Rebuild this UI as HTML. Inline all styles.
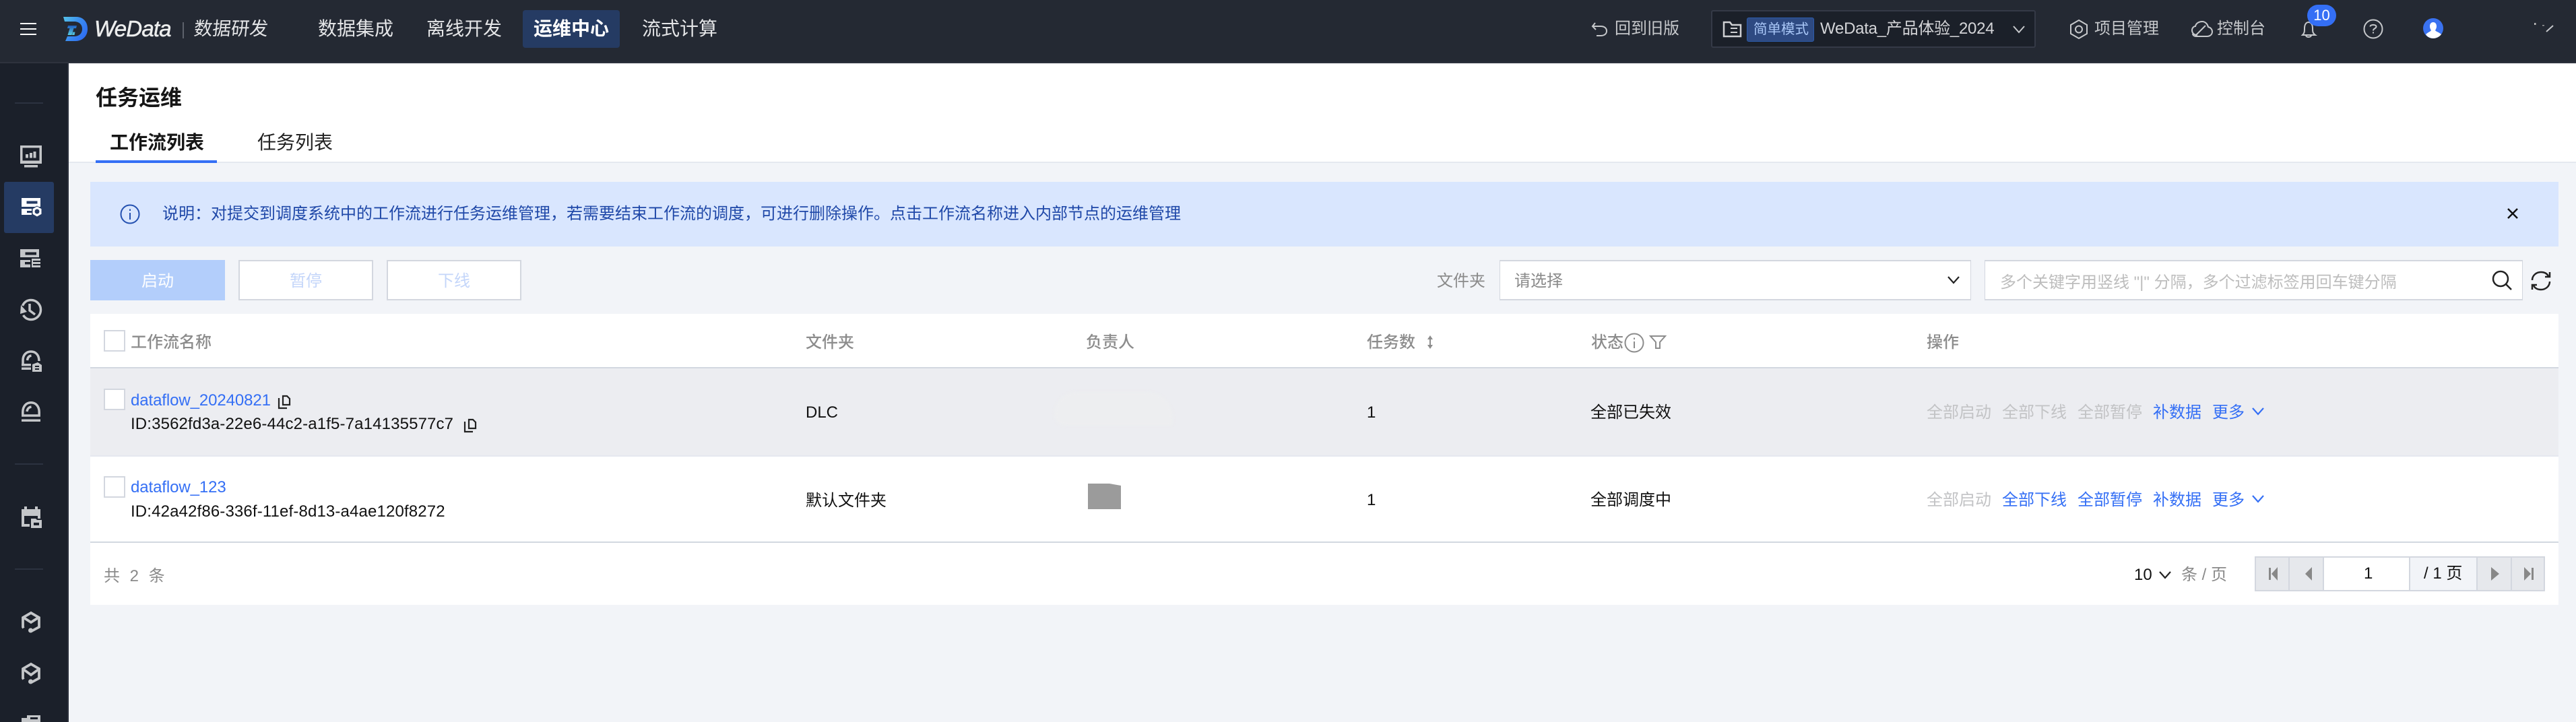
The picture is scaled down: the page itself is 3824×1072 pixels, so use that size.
<!DOCTYPE html>
<html lang="zh"><head><meta charset="utf-8"><title>WeData</title>
<style>
*{box-sizing:border-box}
html,body{margin:0;padding:0;width:3824px;height:1072px;overflow:hidden;background:#f2f4f8;font-family:"Liberation Sans","Noto Sans CJK SC",sans-serif;font-size:24px;color:#111}
.b{position:absolute}
.t{position:absolute;white-space:nowrap;line-height:32px;height:32px}
.nav{font-size:28px;line-height:40px;height:40px;top:23px;color:#e4e5e7}
.top{top:27px;color:#c6c8cb}
.g{color:#8a8a8a}.hd{color:#8c8c8c;font-weight:500;top:493px}
.l{color:#346ff5}.d{color:#c2c3c5}
.cb{position:absolute;left:154px;width:32px;height:32px;background:#fff;border:2px solid #d3d7df}
.btn{position:absolute;top:386px;width:200px;height:60px;line-height:59px;text-align:center;background:#fff;border:2px solid #d3d7df;color:#c4d6fa}
.inp{position:absolute;top:386px;height:60px;background:#fff;border:1px solid #d3d7df;border-top:2px solid #d3d7df;border-bottom:2px solid #d3d7df}
.pg{position:absolute;top:826px;height:52px;background:#e6e8ec;border:2px solid #d3d7df}
svg{position:absolute;overflow:visible}
</style></head><body>

<!-- top bar -->
<div class="b" style="left:0;top:0;width:3824px;height:94px;background:#242933;border-bottom:2px solid #2e323d"></div>
<svg style="left:0;top:0" width="300" height="94" viewBox="0 0 300 94">
<defs><linearGradient id="lg" x1="0" y1="0" x2="1" y2="0.6"><stop offset="0" stop-color="#55c3e8"/><stop offset=".55" stop-color="#3b8df0"/><stop offset="1" stop-color="#2f6ff2"/></linearGradient>
<linearGradient id="lt" x1="0" y1="0" x2="0" y2="1"><stop offset="0" stop-color="#1f5fc0"/><stop offset="1" stop-color="#58cbe0"/></linearGradient></defs>
<path d="M30 35H54M30 43H54M30 51H54" stroke="#fff" stroke-width="2" fill="none"/>
<path d="M94 25H113C124 25 130 33 130 43C130 54 122 61 112 61H97L100 54H110C118 54 122 49 122 43C122 37 118 32 110 32H96Z" fill="url(#lg)"/>
<path d="M101 38H114L113 42H109.500L106.500 52H100.500L103.500 42H100Z M108 47.500H111.500L110.500 52H107Z" fill="url(#lt)"/>
<rect x="271" y="33" width="2" height="24" fill="#5d616b"/>
</svg>
<div class="t" style="left:140px;top:24px;font-size:33px;line-height:38px;height:38px;font-style:italic;font-weight:400;-webkit-text-stroke:.5px #eceded;color:#eceded;letter-spacing:-.8px">WeData</div>
<div class="t" style="left:288px;top:23px;font-size:27.500px;line-height:40px;height:40px;transform:skewX(-6deg);color:#e4e5e7">数据研发</div>
<div class="t nav" style="left:472px">数据集成</div>
<div class="t nav" style="left:633px">离线开发</div>
<div class="b" style="left:776px;top:15px;width:144px;height:56px;background:#253b63;border-radius:4px"></div>
<div class="t nav" style="left:792px;color:#fff;font-weight:700">运维中心</div>
<div class="t nav" style="left:953px">流式计算</div>

<svg style="left:2300px;top:0" width="1524" height="94" viewBox="2300 0 1524 94" fill="none" stroke="#c6c8cb" stroke-width="2">
<path d="M2368 34L2364 39L2369 44M2364 39H2376C2382 39 2385 42 2385 46C2385 50 2382 53 2376 53H2370"/>
<path d="M3086 30L3098 37V50L3086 57L3074 50V37Z"/><circle cx="3086" cy="43.500" r="5"/>
<path d="M3262 52C3256 52 3254 48 3254 45C3254 41 3257 39 3259 39C3260 34 3265 32 3269 32C3274 32 3277 36 3278 40C3282 41 3284 44 3284 47C3284 51 3281 54 3276 54H3260C3257 54 3255 52 3255 50M3258 54L3274 38"/>
<path d="M3418 52C3421 49 3421 47 3421 42C3421 37 3423 33 3427 33C3431 33 3433 37 3433 42C3433 47 3433 49 3437 52ZM3423 52C3423 56 3431 56 3431 52"/>
<circle cx="3523" cy="43" r="13.500"/>
<path d="M3518.500 39.500C3518.500 36 3527.500 36 3527.500 39.500C3527.500 42.500 3523 42 3523 45.500"/>
<rect x="3522" y="47.500" width="2" height="2" fill="#c6c8cb" stroke="none"/>
<path d="M3780 47L3790 38"/><rect x="3762" y="34" width="2.500" height="3" fill="#bbb" stroke="none"/><rect x="3774" y="37" width="3" height="1.500" fill="#999" stroke="none"/>
</svg>
<div class="t top" style="left:2397px">回到旧版</div>
<div class="b" style="left:2540px;top:15px;width:482px;height:56px;background:#1b2029;border:2px solid #353a47;border-radius:3px"></div>
<svg style="left:2555px;top:28px" width="32" height="30" viewBox="0 0 32 30" fill="none" stroke="#cfd0d3" stroke-width="2.500"><path d="M4 5H13L16 9H29V26H4Z"/><path d="M14 14H24M14 20H24" stroke-width="2"/></svg>
<div class="b" style="left:2593px;top:26px;width:100px;height:36px;background:#2e4a82;border:1px solid #2c5ba9;border-radius:3px"></div>
<div class="t" style="left:2603px;top:28px;font-size:20.500px;color:#a9c7f7">简单模式</div>
<div class="t" style="left:2702px;top:27px;color:#d4d5d8;letter-spacing:-.25px">WeData_产品体验_2024</div>
<svg style="left:2988px;top:38px" width="18" height="12" viewBox="0 0 18 12" fill="none" stroke="#c6c8cb" stroke-width="2"><path d="M1 1L9 10L17 1"/></svg>
<div class="t top" style="left:3109px">项目管理</div>
<div class="t top" style="left:3291px">控制台</div>
<div class="b" style="left:3425px;top:7px;width:43px;height:32px;background:#346ff5;border-radius:16px;color:#fff;font-size:22px;line-height:32px;text-align:center">10</div>
<svg style="left:3597px;top:27px" width="30" height="30" viewBox="0 0 30 30"><circle cx="15" cy="15" r="15" fill="#3a72f0"/><path d="M15 6C18.500 6 20 9 20 12C20 15 18.500 17 18 18C19 20 24 21 27 24C24 28 19 30 15 30C11 30 6 28 4 24C7 21 11 20 12 18C11.500 17 10 15 10 12C10 9 11.500 6 15 6Z" fill="#fff"/></svg>

<!-- sidebar -->
<div class="b" style="left:0;top:94px;width:102px;height:978px;background:#1b202a;border-right:2px solid #2b303c"></div>
<div class="b" style="left:6px;top:270px;width:74px;height:76px;background:#253b63;border-radius:3px"></div>
<svg style="left:0;top:0" width="102" height="1072" viewBox="0 0 102 1072" fill="#c4c6c9">
<rect x="22" y="152" width="42" height="2" fill="#2c3240"/>
<rect x="22" y="688" width="42" height="2" fill="#2c3240"/>
<rect x="22" y="844" width="42" height="2" fill="#2c3240"/>
<!-- monitor -->
<path fill-rule="evenodd" d="M30 216H62V243H30ZM33.500 219.500V238.500H58.500V219.500Z"/>
<rect x="36" y="245" width="20" height="3.500"/><rect x="38" y="229" width="4" height="5.500"/><rect x="44" y="227" width="4" height="7.500"/><rect x="49.500" y="225" width="4" height="9.500"/>
<!-- active -->
<path fill="#fff" fill-rule="evenodd" d="M32 294H60V307H32ZM39.500 298.500V302.500H55.500V298.500ZM32 310H47V319H32ZM40 313V316H47V313Z"/>
<path d="M55 306L62 310V318L55 322L48 318V310Z" fill="#fff" stroke="#253b63" stroke-width="1"/><circle cx="55" cy="314" r="3.500" fill="#253b63"/>
<!-- list -->
<path fill-rule="evenodd" d="M30 370H58V382H30ZM37.500 374.500V378.500H54V374.500ZM30 386H45V397H30ZM37 389V392.500H45V389Z"/>
<path d="M47 384H60V387H47ZM47 389H60V392H47ZM47 394H60V397H47Z"/><path d="M47 384H49V397H47Z"/>
<!-- clock -->
<g fill="none" stroke="#c4c6c9" stroke-width="3.500"><path d="M33.500 454C36 448 41 445.500 46 445.500C54 445.500 60.500 452 60.500 460C60.500 468 54 474.500 46 474.500C41 474.500 37 472 34.500 468"/><path d="M44 451V461L52 467"/></g>
<path d="M30 466L31 453L40 463Z"/>
<!-- gauge doc -->
<g fill="none" stroke="#c4c6c9" stroke-width="3.500"><path d="M34 540V535C34 527 39 522 46 522C53 522 58 527 58 536"/><path d="M40.500 535C41 531 43 528.500 46.500 528"/></g>
<rect x="32" y="540" width="14" height="3.500"/><rect x="32" y="545.500" width="14" height="3.500"/>
<path fill-rule="evenodd" d="M48 541L56 538L62 542V552H48ZM52 543V545H58V543ZM52 547V549H58V547Z"/>
<!-- dome -->
<g fill="none" stroke="#c4c6c9" stroke-width="3.500"><path d="M33.800 617V612C33.800 603 39 597.800 46 597.800C53 597.800 58.200 603 58.200 612V617H33.800Z"/><path d="M40 611C40.500 607 43 604.500 46.500 604"/></g>
<rect x="32" y="622.500" width="28" height="3.500"/>
<!-- calendar -->
<path d="M36 752H40V756H52V752H56V756H60V770H56V766H36V778H44V782H32V756H36Z"/>
<path fill-rule="evenodd" d="M46 770H53L55 772H62V784H46ZM50 776V780H58V776Z"/>
<!-- cubes -->
<g fill="none" stroke="#c4c6c9" stroke-width="3.800"><path d="M35 932.500L34 931V917L46 910L58 917V931L46 937.500"/><path d="M35 917L46 924L57 917"/></g><circle cx="45.500" cy="936" r="3.500"/>
<g fill="none" stroke="#c4c6c9" stroke-width="3.800"><path d="M35 1008.500L34 1007V993L46 986L58 993V1007L46 1013.500"/><path d="M35 994L46 1002L57 994"/></g><circle cx="45.500" cy="1012" r="3.500"/>
<path fill-rule="evenodd" d="M40 1062H60V1072H32V1066H40ZM45 1065V1068H56V1065Z"/>
</svg>

<!-- header card -->
<div class="b" style="left:102px;top:94px;width:3722px;height:148px;background:#fff;border-bottom:2px solid #e5e8ef"></div>
<div class="t" style="left:142px;top:124px;font-size:32px;line-height:42px;height:42px;font-weight:700;color:#161616">任务运维</div>
<div class="t" style="left:163px;top:192px;font-size:28px;line-height:40px;height:40px;font-weight:700;color:#161616">工作流列表</div>
<div class="t" style="left:382px;top:192px;font-size:28px;line-height:40px;height:40px;color:#222">任务列表</div>
<div class="b" style="left:142px;top:238px;width:180px;height:4px;background:#346ff5"></div>

<!-- banner -->
<div class="b" style="left:134px;top:270px;width:3664px;height:96px;background:#d9e6fe"></div>
<svg style="left:178px;top:303px" width="30" height="30" viewBox="0 0 30 30" fill="none" stroke="#2350b0" stroke-width="2"><circle cx="15" cy="15" r="13.500"/><path d="M15 13V23" /><rect x="14" y="7.500" width="2" height="2.500" fill="#2350b0" stroke="none"/></svg>
<div class="t" style="left:241px;top:302px;color:#1f48a8">说明：对提交到调度系统中的工作流进行任务运维管理，若需要结束工作流的调度，可进行删除操作。点击工作流名称进入内部节点的运维管理</div>
<svg style="left:3722px;top:309px" width="16" height="16" viewBox="0 0 16 16" fill="none" stroke="#111" stroke-width="2.500"><path d="M1 1L15 15M15 1L1 15"/></svg>

<!-- toolbar -->
<div class="btn" style="left:134px;background:#b3cefb;border-color:#b3cefb;color:#fff">启动</div>
<div class="btn" style="left:354px">暂停</div>
<div class="btn" style="left:574px">下线</div>
<div class="t g" style="left:2133px;top:402px">文件夹</div>
<div class="inp" style="left:2226px;width:700px"></div>
<div class="t g" style="left:2248px;top:402px">请选择</div>
<svg style="left:2890px;top:410px" width="20" height="12" viewBox="0 0 20 12" fill="none" stroke="#222" stroke-width="2.200"><path d="M2 1L10 10L18 1"/></svg>
<div class="inp" style="left:2946px;width:799px"></div>
<div class="t" style="left:2969px;top:404px;color:#bdbdbd">多个关键字用竖线 "|" 分隔，多个过滤标签用回车键分隔</div>
<svg style="left:3698px;top:400px" width="32" height="32" viewBox="0 0 32 32" fill="none" stroke="#222" stroke-width="2.500"><circle cx="14" cy="14" r="11"/><path d="M22 22L30 30"/></svg>
<svg style="left:3756px;top:402px" width="32" height="30" viewBox="0 0 32 30" fill="none" stroke="#222" stroke-width="2.500"><path d="M3 14C3 7 9 2 16 2C21 2 25 4 27 8M29 16C29 23 23 28 16 28C11 28 7 26 5 22"/><path d="M22 9H29V2M10 21H3V28"/></svg>

<!-- table -->
<div class="b" style="left:134px;top:466px;width:3664px;height:432px;background:#fff"></div>
<div class="b" style="left:134px;top:545px;width:3664px;height:2px;background:#d2d8e0"></div>
<div class="b" style="left:134px;top:547px;width:3664px;height:129px;background:#ecedf1"></div>
<div class="b" style="left:134px;top:676px;width:3664px;height:2px;background:#e5e8ef"></div>
<div class="b" style="left:134px;top:804px;width:3664px;height:2px;background:#d2d8e0"></div>

<div class="cb" style="top:490px"></div>
<div class="t hd" style="left:194px">工作流名称</div>
<div class="t hd" style="left:1196px">文件夹</div>
<div class="t hd" style="left:1612px">负责人</div>
<div class="t hd" style="left:2029px">任务数</div>
<svg style="left:2116px;top:497px" width="14" height="22" viewBox="0 0 14 22" fill="#8c8c8c"><path d="M7 1L11 7H8V15H11L7 21L3 15H6V7H3Z"/></svg>
<div class="t hd" style="left:2362px">状态</div>
<svg style="left:2411px;top:494px" width="30" height="30" viewBox="0 0 30 30" fill="none" stroke="#8c8c8c" stroke-width="2"><circle cx="15" cy="15" r="13.500"/><path d="M15 13V23"/><rect x="14" y="7.500" width="2" height="2.500" fill="#8c8c8c" stroke="none"/></svg>
<svg style="left:2448px;top:497px" width="26" height="22" viewBox="0 0 26 22" fill="none" stroke="#8c8c8c" stroke-width="2"><path d="M2 2H24L16 11V20H10V11Z"/></svg>
<div class="t hd" style="left:2860px">操作</div>

<!-- row 1 -->
<div class="cb" style="top:577px"></div>
<div class="t l" style="left:194px;top:579px;letter-spacing:-.1px">dataflow_20240821</div>
<svg style="left:412px;top:586px" width="20" height="21" viewBox="0 0 20 21" fill="none" stroke="#222" stroke-width="2.200"><path d="M8 2H14L18 6V15H8Z"/><path d="M2 5V20H14"/></svg>
<div class="t" style="left:194px;top:614px;letter-spacing:.14px">ID:3562fd3a-22e6-44c2-a1f5-7a14135577c7</div>
<svg style="left:688px;top:621px" width="20" height="21" viewBox="0 0 20 21" fill="none" stroke="#222" stroke-width="2.200"><path d="M8 2H14L18 6V15H8Z"/><path d="M2 5V20H14"/></svg>
<div class="t" style="left:1196px;top:597px">DLC</div>
<div class="b" style="left:1565px;top:582px;width:176px;height:50px;background:#edeef0;border-radius:60px 70px 4px 30px;filter:blur(2px)"></div>
<div class="t" style="left:2029px;top:597px">1</div>
<div class="t" style="left:2361px;top:597px">全部已失效</div>
<div class="t d" style="left:2860px;top:597px">全部启动</div>
<div class="t d" style="left:2972px;top:597px">全部下线</div>
<div class="t d" style="left:3084px;top:597px">全部暂停</div>
<div class="t l" style="left:3196px;top:597px">补数据</div>
<div class="t l" style="left:3284px;top:597px">更多</div>
<svg style="left:3343px;top:605px" width="18" height="11" viewBox="0 0 18 11" fill="none" stroke="#346ff5" stroke-width="2.200"><path d="M1 1L9 10L17 1"/></svg>

<!-- row 2 -->
<div class="cb" style="top:707px"></div>
<div class="t l" style="left:194px;top:708px;letter-spacing:-.1px">dataflow_123</div>
<div class="t" style="left:194px;top:744px;letter-spacing:.14px">ID:42a42f86-336f-11ef-8d13-a4ae120f8272</div>
<div class="t" style="left:1196px;top:728px">默认文件夹</div>
<svg style="left:1615px;top:718px" width="50" height="38" viewBox="0 0 50 38"><path d="M0 0H32L49 3V38H0Z" fill="#9b9b9b"/></svg>
<div class="t" style="left:2029px;top:727px">1</div>
<div class="t" style="left:2361px;top:727px">全部调度中</div>
<div class="t d" style="left:2860px;top:727px">全部启动</div>
<div class="t l" style="left:2972px;top:727px">全部下线</div>
<div class="t l" style="left:3084px;top:727px">全部暂停</div>
<div class="t l" style="left:3196px;top:727px">补数据</div>
<div class="t l" style="left:3284px;top:727px">更多</div>
<svg style="left:3343px;top:735px" width="18" height="11" viewBox="0 0 18 11" fill="none" stroke="#346ff5" stroke-width="2.200"><path d="M1 1L9 10L17 1"/></svg>

<!-- footer -->
<div class="t g" style="left:154px;top:840px;word-spacing:8px">共 2 条</div>
<div class="t" style="left:3168px;top:838px">10</div>
<svg style="left:3205px;top:848px" width="18" height="12" viewBox="0 0 18 12" fill="none" stroke="#222" stroke-width="2.200"><path d="M1 1L9 10L17 1"/></svg>
<div class="t g" style="left:3238px;top:838px">条 / 页</div>
<div class="pg" style="left:3347px;width:52px"></div>
<div class="pg" style="left:3397px;width:53px"></div>
<div class="pg" style="left:3448px;width:130px;background:#fff"></div>
<div class="pg" style="left:3576px;width:102px;background:#f2f4f8"></div>
<div class="pg" style="left:3676px;width:53px"></div>
<div class="pg" style="left:3727px;width:51px"></div>
<div class="t" style="left:3509px;top:836px">1</div>
<div class="t" style="left:3598px;top:836px">/ 1 页</div>
<svg style="left:3347px;top:826px" width="431" height="52" viewBox="0 0 431 52" fill="#888">
<path d="M21 17H24V35H21ZM34 16V36L25 26Z"/><path d="M85 16V36L75 26Z"/><path d="M351 16V36L363 26Z"/><path d="M400 16V36L410 26ZM411 17H414V35H411Z"/>
</svg>
</body></html>
